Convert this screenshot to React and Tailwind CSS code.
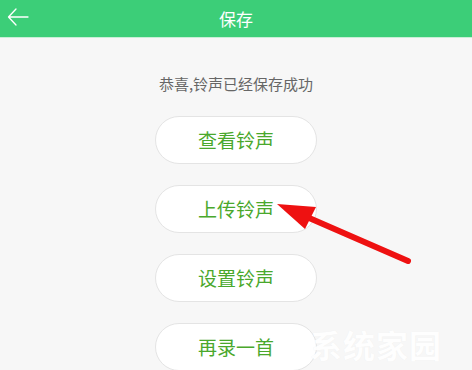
import React from "react";

const font = { fontFamily: '"Noto Sans CJK SC", "Noto Sans", sans-serif' };

function Btn({ children }) {
  return (
    <div className="w-[162px] h-[48px] rounded-full bg-white border border-[#e4e4e4] flex items-center justify-center text-[19px] text-[#4aa82c] shrink-0">
      {children}
    </div>
  );
}

export default function App() {
  return (
    <div className="relative w-[472px] h-[370px] overflow-hidden bg-[#f7f7f7]" style={font}>
      <div className="h-[38px] bg-[#3cce78] flex items-center relative border-b border-[#c8efd6]">
        <svg className="absolute left-[7px] top-[7px]" width="22" height="20" viewBox="0 0 22 20" fill="none" stroke="white" strokeWidth="1.3" strokeLinecap="round" strokeLinejoin="round">
          <path d="M21 10H2M9 2L1.5 10L9 18" />
        </svg>
        <div className="flex-1 text-center text-white text-[17px] leading-none">保存</div>
      </div>
      <div className="flex flex-col items-center">
        <div className="mt-[38px] text-[15px] leading-none text-[#666666]">恭喜,铃声已经保存成功</div>
        <div className="mt-[25px] flex flex-col items-center gap-[21px]">
          <Btn>查看铃声</Btn>
          <Btn>上传铃声</Btn>
          <Btn>设置铃声</Btn>
          <Btn>再录一首</Btn>
        </div>
      </div>
      <svg className="absolute left-0 top-0 pointer-events-none" width="472" height="370" viewBox="0 0 472 370">
        <line x1="408" y1="261" x2="300" y2="214" stroke="#ee1111" strokeWidth="6" strokeLinecap="round" />
        <polygon points="277,204 316,207 305,229" fill="#ee1111" />
      </svg>
      <div className="absolute left-[310px] top-[328px] text-white text-[32px] font-bold leading-none tracking-[1px] opacity-95" style={{ textShadow: "0 0 1px rgba(0,0,0,0.05)" }}>系统家园</div>
    </div>
  );
}
